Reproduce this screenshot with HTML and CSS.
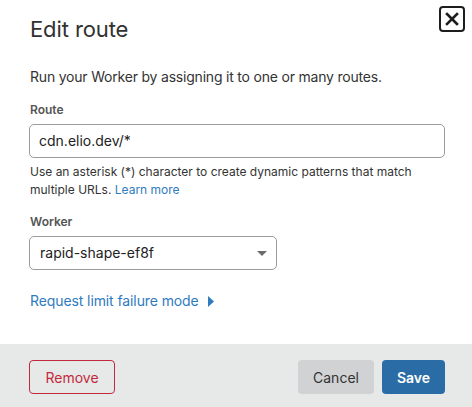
FILE: index.html
```html
<!DOCTYPE html>
<html>
<head>
<meta charset="utf-8">
<link rel="stylesheet" href="styles.css">
</head>
<body>
<div class="modal">
  <div class="body">
    <div class="head">
      <h1 class="title">Edit route</h1>
      <button class="close" aria-label="Close">
        <svg width="14" height="14" viewBox="0 0 14 14"><path d="M2 2L12 12M12 2L2 12" stroke="#1d1d1d" stroke-width="2.6" stroke-linecap="square"/></svg>
      </button>
    </div>
    <p class="intro">Run your Worker by assigning it to one or many routes.</p>
    <label class="label">Route</label>
    <div class="input">cdn.elio.dev/*</div>
    <p class="help">Use an asterisk (*) character to create dynamic patterns that match multiple URLs. <a class="link">Learn more</a></p>
    <label class="label worker">Worker</label>
    <div class="select">
      <span>rapid-shape-ef8f</span>
      <svg class="caret" width="10" height="5" viewBox="0 0 10 5"><path d="M0 0H10L5 5Z" fill="#6b6b6b"/></svg>
    </div>
    <a class="toggle">Request limit failure mode <svg width="6" height="11" viewBox="0 0 6 11"><path d="M0 0L6 5.5L0 11Z" fill="#2f7bbf"/></svg></a>
  </div>
  <div class="footer">
    <button class="btn remove">Remove</button>
    <div class="actions">
      <button class="btn cancel">Cancel</button>
      <button class="btn save">Save</button>
    </div>
  </div>
</div>
</body>
</html>
```
FILE: styles.css
```css
html, body { margin: 0; padding: 0; background: #fff; }
body { font-family: Inter, "Noto Sans", sans-serif; color: #222; width: 472px; height: 407px; overflow: hidden; }
.modal { display: flex; flex-direction: column; height: 407px; }
.body { flex: 1; padding: 0 27px 0 29px; display: flex; flex-direction: column; }
.head { display: flex; justify-content: space-between; align-items: flex-start; }
.title { margin: 15px 0 0 1px; font-size: 22px; font-weight: 400; color: #313131; line-height: 28px; letter-spacing: -0.1px; }
.close { margin: 6px -20px 0 0; width: 26px; height: 26px; border: 2px solid #1d1d1d; border-radius: 4px; background: #fff; padding: 0; display: flex; align-items: center; justify-content: center; }
.intro { margin: 25px 0 0 1px; font-size: 14px; letter-spacing: -0.2px; line-height: 18px; color: #333; }
.label { display: block; margin: 16px 0 0 1px; font-size: 12px; font-weight: 600; color: #555; line-height: 16px; }
.label.worker { margin-top: 15px; }
.input { margin-top: 6px; height: 32px; border: 1px solid #9b9b9b; border-radius: 5px; padding: 0 9px; font-size: 14px; line-height: 32px; color: #222; }
.help { margin: 5px 0 0 1px; font-size: 12px; line-height: 18px; color: #333; }
.link { color: #2f7bbf; }
.select { margin-top: 6px; height: 32px; border: 1px solid #9b9b9b; border-radius: 5px; padding: 0 9px 0 10px; font-size: 14px; line-height: 32px; color: #222; display: flex; justify-content: space-between; align-items: center; box-sizing: content-box; width: 227px; }
.caret { margin-top: 1px; }
.toggle { margin: 22px 0 0 1px; font-size: 14px; letter-spacing: -0.1px; line-height: 18px; color: #2f7bbf; display: flex; align-items: center; gap: 9px; }
.footer { height: 63px; background: #e7e8e8; display: flex; justify-content: space-between; align-items: flex-start; padding: 16px 27px 0 29px; box-sizing: border-box; }
.actions { display: flex; gap: 8px; }
.btn { font-family: Inter, "Noto Sans", sans-serif; font-size: 14px; height: 34px; border-radius: 4px; padding: 0; cursor: pointer; }
.remove { width: 86px; background: transparent; border: 1px solid #c22a3c; color: #c22a3c; }
.cancel { width: 76px; background: #d1d2d4; border: none; color: #333; }
.save { width: 63px; background: #2a6da6; border: none; color: #fff; font-weight: 600; }
```
